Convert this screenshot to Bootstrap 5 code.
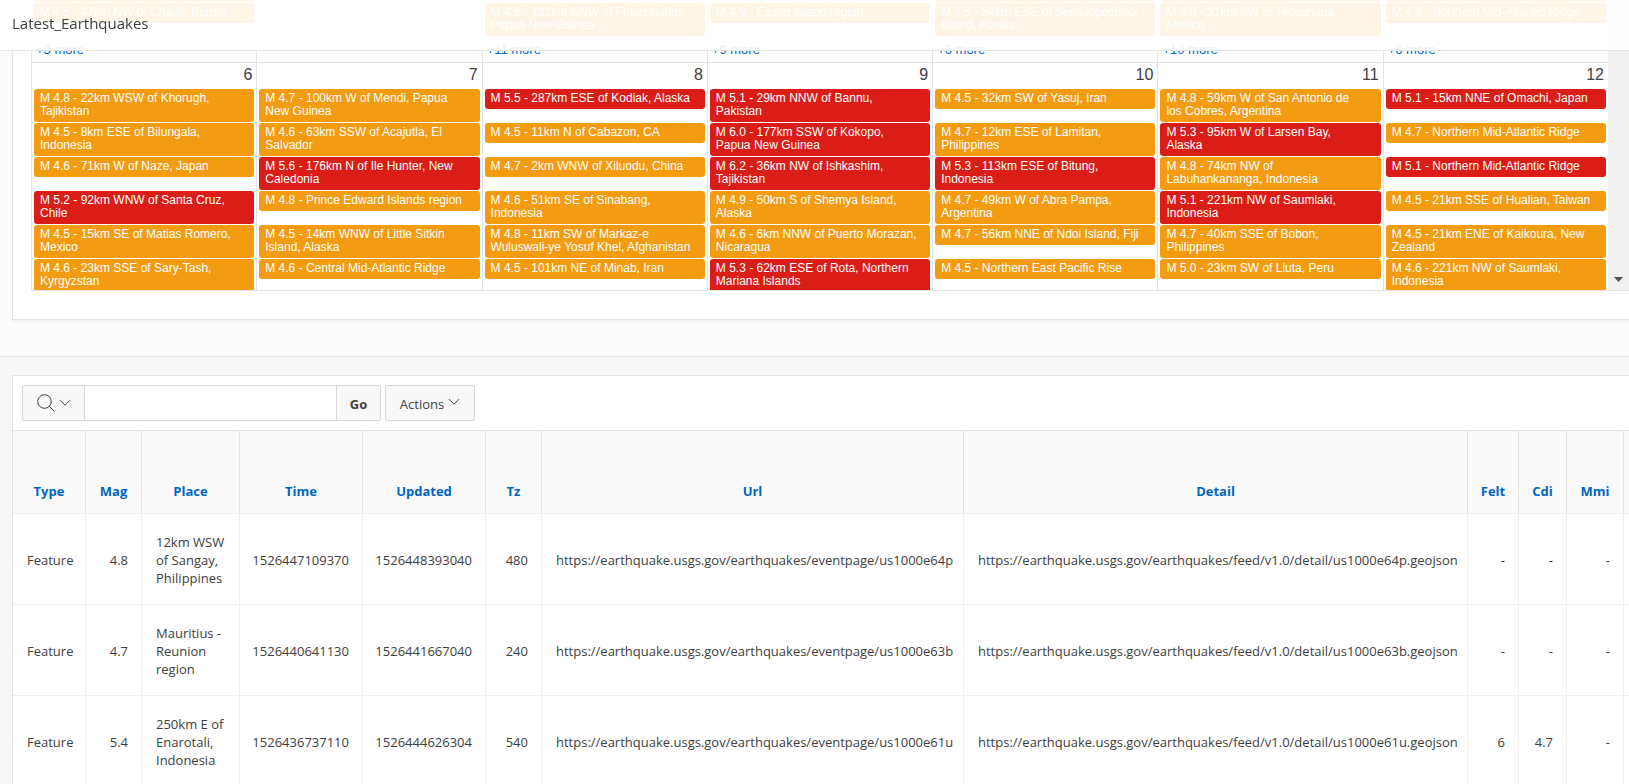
<!DOCTYPE html>
<html lang="en">
<head>
<meta charset="utf-8">
<meta name="viewport" content="width=device-width, initial-scale=1">
<title>Latest_Earthquakes</title>
<link href="https://cdn.jsdelivr.net/npm/bootstrap@5.3.0/dist/css/bootstrap.min.css" rel="stylesheet">
<style>
  body { font-family: "Open Sans", "Noto Sans", sans-serif; font-size: 13px; line-height: 18px; color: #404040; background: #f7f7f7; overflow: hidden; }
  .page-title { height: 51px; background: rgba(255,255,255,.9); border-bottom: 1px solid #e4e4e4; font-size: 15px; line-height: 20px; padding: 13px 12px 0; }
  .band { background: #fcfcfc; border-bottom: 1px solid #e8e8e8; padding-bottom: 36px; }
  .region { margin-left: 12px; background: #fff; border: 1px solid #e4e4e4; border-right: 0; }
  .cal-region { border-top: 0; padding: 0 0 28px 18px; box-shadow: 0 2px 2px rgba(0,0,0,.04); }
  .cal { height: 291px; border-bottom: 1px solid #e4e4e4; font-family: "Liberation Sans", Arial, sans-serif; }
  .week + .week { border-top: 1px solid #e4e4e4; }
  .week-prev { height: 62px; }
  .day { flex: 1 1 0; min-width: 0; border-left: 1px solid #e4e4e4; padding: 0 2px; }
  .num { height: 25px; font-size: 16px; line-height: 24px; text-align: right; padding-right: 2px; }
  .slot { height: 34px; padding-top: 1px; flex-shrink: 0; }
  .ev { display: block; min-height: 20px; padding: 3px 4px 4px 6px; border-radius: 3px; background: #f39c12; color: #fff; font-size: 12px; line-height: 13px; text-decoration: none; }
  .ev.strong { background: #da1e17; }
  .ev.tall { min-height: 33px; }
  .more { height: 26px; padding: 5px 2px 0; font-size: 13px; line-height: 18px; flex-shrink: 0; }
  .more a { color: #0066c0; text-decoration: none; }
  .cal-scroll { width: 21px; background: #f0f0f0; padding-bottom: 8px; }
  .report { margin-top: 18px; }
  .tools { padding: 9px; height: 54px; }
  .tools .btn, .tools .form-control { height: 36px; font-size: 13px; line-height: 18px; border: 1px solid #d8d8d8; border-radius: 2px; color: #404040; box-shadow: none; }
  .tools .btn { background: #f8f8f8; }
  .tools .group { width: 359px; }
  .tools .pick { width: 63px; }
  .tools .go { width: 45px; font-weight: 700; padding: 2px 0 0; }
  .tools .actions { width: 90px; padding: 2px 0 0; }
  .ir { table-layout: fixed; width: 1671px; margin: 0; border-collapse: separate; border-spacing: 0; color: #404040; }
  .ir th, .ir td { border-right: 1px solid #f0f0f0; border-bottom: 1px solid #f0f0f0; }
  .ir th { height: 84px; border-top: 1px solid #e4e4e4; border-right-color: #e4e4e4; background: #fafafa; text-align: center; vertical-align: bottom; padding: 0 12px 13px; font-weight: 700; }
  .ir th a { color: #0066c0; text-decoration: none; }
  .ir td { height: 91px; padding: 2px 14px 0; vertical-align: middle; white-space: nowrap; }
  .ir td.place { white-space: normal; padding-right: 10px; }
  .ir td.n { text-align: right; padding-left: 4px; padding-right: 13px; }
</style>
</head>
<body>
<header class="page-title fixed-top">Latest_Earthquakes</header>
<main>
<section class="band">
  <div class="region cal-region">
    <div class="cal d-flex overflow-hidden">
      <div class="flex-grow-1">
        <div class="week week-prev d-flex overflow-hidden">
          <div class="day d-flex flex-column justify-content-end">
            <div class="slot"><span class="ev tall"></span></div>
            <div class="slot"><a class="ev" href="#">M 4.5 - 47km NW of Chauk, Burma</a></div>
            <div class="more"><a href="#">+3 more</a></div>
          </div>
          <div class="day"></div>
          <div class="day d-flex flex-column justify-content-end">
            <div class="slot"><a class="ev" href="#">M 4.5 - 132km NNW of Finschhafen, Papua New Guinea</a></div>
            <div class="more"><a href="#">+11 more</a></div>
          </div>
          <div class="day d-flex flex-column justify-content-end">
            <div class="slot"><a class="ev" href="#">M 4.9 - Easter Island region</a></div>
            <div class="more"><a href="#">+9 more</a></div>
          </div>
          <div class="day d-flex flex-column justify-content-end">
            <div class="slot"><span class="ev tall"></span></div>
            <div class="slot"><a class="ev" href="#">M 4.5 - 54km ESE of Semisopochnoi Island, Alaska</a></div>
            <div class="more"><a href="#">+6 more</a></div>
          </div>
          <div class="day d-flex flex-column justify-content-end">
            <div class="slot"><span class="ev tall"></span></div>
            <div class="slot"><a class="ev" href="#">M 4.8 - 31km SW of Tecoanapa, Mexico</a></div>
            <div class="more"><a href="#">+10 more</a></div>
          </div>
          <div class="day d-flex flex-column justify-content-end">
            <div class="slot"><span class="ev tall"></span></div>
            <div class="slot"><a class="ev" href="#">M 4.8 - Northern Mid-Atlantic Ridge</a></div>
            <div class="more"><a href="#">+6 more</a></div>
          </div>
        </div>
        <div class="week d-flex">
          <div class="day">
            <div class="num">6</div>
            <div class="slot"><a class="ev" href="#">M 4.8 - 22km WSW of Khorugh, Tajikistan</a></div>
            <div class="slot"><a class="ev" href="#">M 4.5 - 8km ESE of Bilungala, Indonesia</a></div>
            <div class="slot"><a class="ev" href="#">M 4.6 - 71km W of Naze, Japan</a></div>
            <div class="slot"><a class="ev strong" href="#">M 5.2 - 92km WNW of Santa Cruz, Chile</a></div>
            <div class="slot"><a class="ev" href="#">M 4.5 - 15km SE of Matias Romero, Mexico</a></div>
            <div class="slot"><a class="ev" href="#">M 4.6 - 23km SSE of Sary-Tash, Kyrgyzstan</a></div>
          </div>
          <div class="day">
            <div class="num">7</div>
            <div class="slot"><a class="ev" href="#">M 4.7 - 100km W of Mendi, Papua<br>New Guinea</a></div>
            <div class="slot"><a class="ev" href="#">M 4.6 - 63km SSW of Acajutla, El Salvador</a></div>
            <div class="slot"><a class="ev strong" href="#">M 5.6 - 176km N of Ile Hunter, New Caledonia</a></div>
            <div class="slot"><a class="ev" href="#">M 4.8 - Prince Edward Islands region</a></div>
            <div class="slot"><a class="ev" href="#">M 4.5 - 14km WNW of Little Sitkin Island, Alaska</a></div>
            <div class="slot"><a class="ev" href="#">M 4.6 - Central Mid-Atlantic Ridge</a></div>
          </div>
          <div class="day">
            <div class="num">8</div>
            <div class="slot"><a class="ev strong" href="#">M 5.5 - 287km ESE of Kodiak, Alaska</a></div>
            <div class="slot"><a class="ev" href="#">M 4.5 - 11km N of Cabazon, CA</a></div>
            <div class="slot"><a class="ev" href="#">M 4.7 - 2km WNW of Xiluodu, China</a></div>
            <div class="slot"><a class="ev" href="#">M 4.6 - 51km SE of Sinabang, Indonesia</a></div>
            <div class="slot"><a class="ev" href="#">M 4.8 - 11km SW of Markaz-e Wuluswali-ye Yosuf Khel, Afghanistan</a></div>
            <div class="slot"><a class="ev" href="#">M 4.5 - 101km NE of Minab, Iran</a></div>
          </div>
          <div class="day">
            <div class="num">9</div>
            <div class="slot"><a class="ev strong" href="#">M 5.1 - 29km NNW of Bannu,<br>Pakistan</a></div>
            <div class="slot"><a class="ev strong" href="#">M 6.0 - 177km SSW of Kokopo,<br>Papua New Guinea</a></div>
            <div class="slot"><a class="ev strong" href="#">M 6.2 - 36km NW of Ishkashim, Tajikistan</a></div>
            <div class="slot"><a class="ev" href="#">M 4.9 - 50km S of Shemya Island, Alaska</a></div>
            <div class="slot"><a class="ev" href="#">M 4.6 - 6km NNW of Puerto Morazan, Nicaragua</a></div>
            <div class="slot"><a class="ev strong" href="#">M 5.3 - 62km ESE of Rota, Northern Mariana Islands</a></div>
          </div>
          <div class="day">
            <div class="num">10</div>
            <div class="slot"><a class="ev" href="#">M 4.5 - 32km SW of Yasuj, Iran</a></div>
            <div class="slot"><a class="ev" href="#">M 4.7 - 12km ESE of Lamitan, Philippines</a></div>
            <div class="slot"><a class="ev strong" href="#">M 5.3 - 113km ESE of Bitung, Indonesia</a></div>
            <div class="slot"><a class="ev" href="#">M 4.7 - 49km W of Abra Pampa, Argentina</a></div>
            <div class="slot"><a class="ev" href="#">M 4.7 - 56km NNE of Ndoi Island, Fiji</a></div>
            <div class="slot"><a class="ev" href="#">M 4.5 - Northern East Pacific Rise</a></div>
          </div>
          <div class="day">
            <div class="num">11</div>
            <div class="slot"><a class="ev" href="#">M 4.8 - 59km W of San Antonio de<br>los Cobres, Argentina</a></div>
            <div class="slot"><a class="ev strong" href="#">M 5.3 - 95km W of Larsen Bay,<br>Alaska</a></div>
            <div class="slot"><a class="ev" href="#">M 4.8 - 74km NW of<br>Labuhankananga, Indonesia</a></div>
            <div class="slot"><a class="ev strong" href="#">M 5.1 - 221km NW of Saumlaki, Indonesia</a></div>
            <div class="slot"><a class="ev" href="#">M 4.7 - 40km SSE of Bobon, Philippines</a></div>
            <div class="slot"><a class="ev" href="#">M 5.0 - 23km SW of Lluta, Peru</a></div>
          </div>
          <div class="day">
            <div class="num">12</div>
            <div class="slot"><a class="ev strong" href="#">M 5.1 - 15km NNE of Omachi, Japan</a></div>
            <div class="slot"><a class="ev" href="#">M 4.7 - Northern Mid-Atlantic Ridge</a></div>
            <div class="slot"><a class="ev strong" href="#">M 5.1 - Northern Mid-Atlantic Ridge</a></div>
            <div class="slot"><a class="ev" href="#">M 4.5 - 21km SSE of Hualian, Taiwan</a></div>
            <div class="slot"><a class="ev" href="#">M 4.5 - 21km ENE of Kaikoura, New Zealand</a></div>
            <div class="slot"><a class="ev" href="#">M 4.6 - 221km NW of Saumlaki, Indonesia</a></div>
          </div>
        </div>
      </div>
      <div class="cal-scroll d-flex align-items-end justify-content-center flex-shrink-0">
        <svg width="9" height="5" viewBox="0 0 9 5" aria-hidden="true"><path d="M0 0h9L4.5 5z" fill="#505050"/></svg>
      </div>
    </div>
  </div>
</section>

<section class="region report overflow-hidden">
  <form class="tools d-flex gap-1" onsubmit="return false">
    <div class="group input-group flex-nowrap">
      <button type="button" class="btn pick d-flex align-items-center justify-content-center gap-1 p-0" aria-label="Select columns to search">
        <svg width="18" height="18" viewBox="0 0 18 18" fill="none" stroke="#404040" aria-hidden="true"><circle cx="7.5" cy="7.5" r="6.8"/><path d="M12.3 12.3l5 5"/></svg>
        <svg width="12" height="8" viewBox="0 0 12 8" fill="none" stroke="#404040" aria-hidden="true"><path d="M1 1.2l5 5 5-5"/></svg>
      </button>
      <input type="text" class="form-control" aria-label="Search report">
      <button type="submit" class="btn go">Go</button>
    </div>
    <button type="button" class="btn actions d-flex align-items-center justify-content-center gap-1">Actions
      <svg class="mb-1" width="12" height="8" viewBox="0 0 12 8" fill="none" stroke="#404040" aria-hidden="true"><path d="M1 1.2l5 5 5-5"/></svg>
    </button>
  </form>
  <table class="ir">
    <colgroup>
      <col style="width:73px"><col style="width:56px"><col style="width:98px"><col style="width:123px"><col style="width:123px"><col style="width:56px"><col style="width:422px"><col style="width:504px"><col style="width:51px"><col style="width:48px"><col style="width:57px"><col>
    </colgroup>
    <thead>
      <tr><th><a href="#">Type</a></th><th><a href="#">Mag</a></th><th><a href="#">Place</a></th><th><a href="#">Time</a></th><th><a href="#">Updated</a></th><th><a href="#">Tz</a></th><th><a href="#">Url</a></th><th><a href="#">Detail</a></th><th><a href="#">Felt</a></th><th><a href="#">Cdi</a></th><th><a href="#">Mmi</a></th><th></th></tr>
    </thead>
    <tbody>
      <tr><td>Feature</td><td class="n">4.8</td><td class="place">12km WSW of Sangay, Philippines</td><td class="n">1526447109370</td><td class="n">1526448393040</td><td class="n">480</td><td>https://earthquake.usgs.gov/earthquakes/eventpage/us1000e64p</td><td>https://earthquake.usgs.gov/earthquakes/feed/v1.0/detail/us1000e64p.geojson</td><td class="n">-</td><td class="n">-</td><td class="n">-</td><td></td></tr>
      <tr><td>Feature</td><td class="n">4.7</td><td class="place">Mauritius - Reunion region</td><td class="n">1526440641130</td><td class="n">1526441667040</td><td class="n">240</td><td>https://earthquake.usgs.gov/earthquakes/eventpage/us1000e63b</td><td>https://earthquake.usgs.gov/earthquakes/feed/v1.0/detail/us1000e63b.geojson</td><td class="n">-</td><td class="n">-</td><td class="n">-</td><td></td></tr>
      <tr><td>Feature</td><td class="n">5.4</td><td class="place">250km E of Enarotali, Indonesia</td><td class="n">1526436737110</td><td class="n">1526444626304</td><td class="n">540</td><td>https://earthquake.usgs.gov/earthquakes/eventpage/us1000e61u</td><td>https://earthquake.usgs.gov/earthquakes/feed/v1.0/detail/us1000e61u.geojson</td><td class="n">6</td><td class="n">4.7</td><td class="n">-</td><td></td></tr>
    </tbody>
  </table>
</section>
</main>
<script src="https://cdn.jsdelivr.net/npm/bootstrap@5.3.0/dist/js/bootstrap.bundle.min.js"></script>
</body>
</html>
